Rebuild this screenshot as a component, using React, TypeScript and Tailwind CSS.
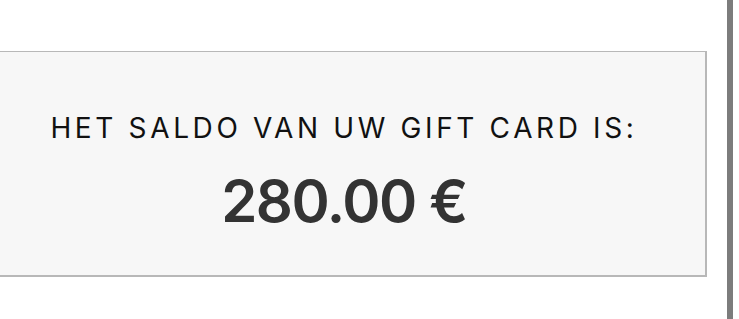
import React from 'react';

export default function App() {
  return (
    <div className="relative h-[319px] w-[739px] overflow-hidden bg-white font-['Inter',sans-serif]">
      <div className="pt-[51px]">
        {/* Balance card */}
        <div className="-ml-[19px] flex h-[226px] w-[726px] flex-col items-center border-2 border-t border-[#b8b8b8] bg-[#f7f7f7] pt-[60px]">
          <h2 className="text-[28px] font-normal uppercase leading-[32px] tracking-[0.13em] text-[#111]">
            Het saldo van uw gift card is:
          </h2>
          <div className="mt-[25px] text-[58px] font-semibold leading-[64px] tracking-[-0.025em] text-[#333]">
            280.00 €
          </div>
        </div>
      </div>
      {/* right edge bar */}
      <div className="absolute right-[6px] top-0 h-full w-[6px] bg-[#7c7c7c]" />
    </div>
  );
}
